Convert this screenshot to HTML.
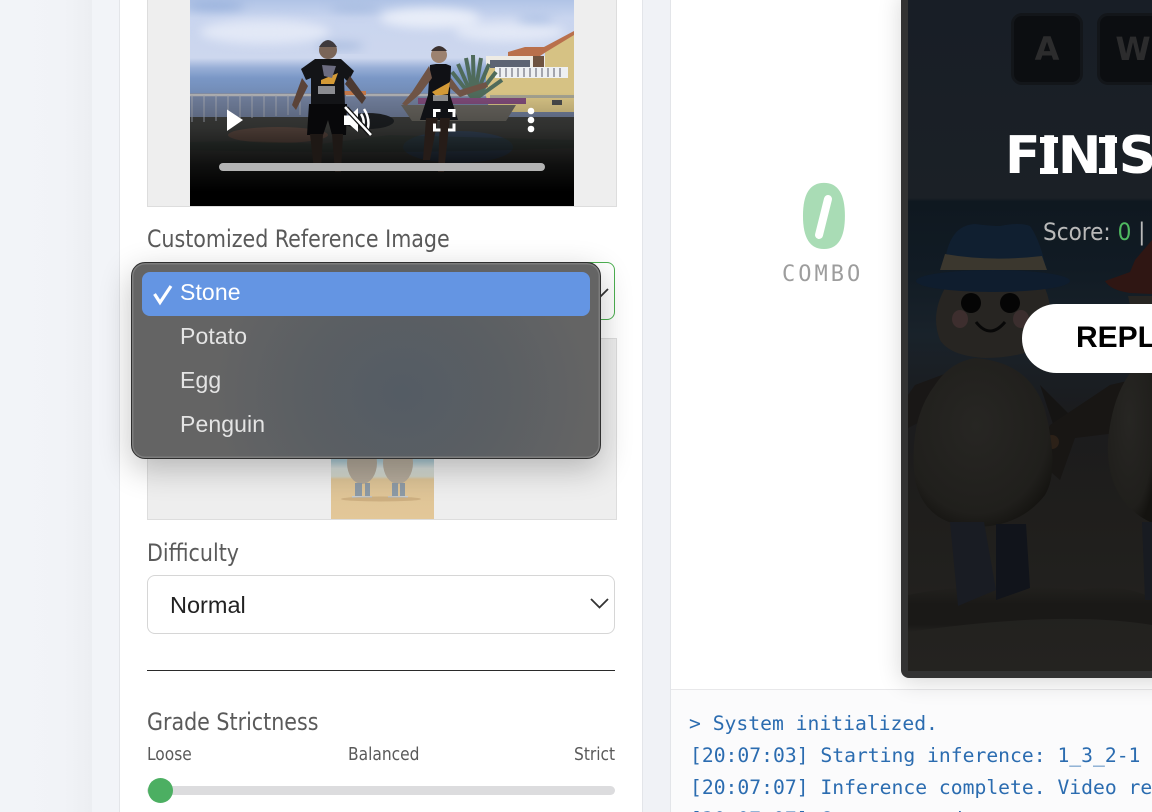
<!DOCTYPE html>
<html><head><meta charset="utf-8">
<style>
html,body{margin:0;padding:0;width:1152px;height:812px;overflow:hidden;background:#f0f2f6}
#root{position:absolute;left:0;top:0;width:1152px;height:812px;overflow:hidden;background:#f0f2f6}
div,span,svg{position:absolute;box-sizing:border-box}
span.i{position:static}
.t{white-space:nowrap;font-family:"DejaVu Sans Condensed","DejaVu Sans",sans-serif;color:#5a5a5a;line-height:1;transform-origin:0 50%;transform:scaleX(.955)}
.m{white-space:nowrap;font-family:"DejaVu Sans Mono",monospace;line-height:32px;font-size:19.7px;color:#2b6cb0;left:690px}
.o{white-space:nowrap;font-family:"Liberation Sans",sans-serif;font-size:23px;line-height:1;color:#e4e4e4;left:180px;letter-spacing:.1px}
</style></head><body><div id="root">
<div style="left:0;top:0;width:92px;height:812px;background:linear-gradient(90deg,#f2f4f8 0,#f1f3f7 70%,#eceef2 100%)"></div>
<div style="left:92px;top:0;width:28px;height:812px;background:#f2f4f8"></div>
<div style="left:119px;top:0;width:524px;height:812px;background:#fff;border-left:1px solid #e3e5e9;border-right:1px solid #e3e5e9"></div>

<!-- video -->
<div style="left:147px;top:-2px;width:470px;height:209px;background:#eee;border:1px solid #ddd"></div>
<svg style="left:190px;top:0" width="384" height="206" viewBox="0 0 384 206">
<defs>
<linearGradient id="sky" x1="0" y1="0" x2="0" y2="1"><stop offset="0" stop-color="#b0c3e6"/><stop offset=".18" stop-color="#c9d5ef"/><stop offset=".58" stop-color="#cdd7ee"/><stop offset=".68" stop-color="#97aed6"/><stop offset=".78" stop-color="#7a97c6"/><stop offset="1" stop-color="#6f87ae"/></linearGradient>
<linearGradient id="fade" x1="0" y1="0" x2="0" y2="1"><stop offset="0" stop-color="#000" stop-opacity="0"/><stop offset=".45" stop-color="#000" stop-opacity="0"/><stop offset=".62" stop-color="#000" stop-opacity=".25"/><stop offset=".8" stop-color="#000" stop-opacity=".75"/><stop offset=".93" stop-color="#000"/><stop offset="1" stop-color="#000"/></linearGradient>
<filter id="b6" color-interpolation-filters="sRGB"><feGaussianBlur stdDeviation="5"/></filter>
</defs>
<rect width="384" height="100" fill="url(#sky)"/>
<g filter="url(#b6)">
<ellipse cx="25" cy="6" rx="30" ry="4" fill="#94aeda"/>
<ellipse cx="165" cy="8" rx="26" ry="4" fill="#a6bbe0"/>
<ellipse cx="150" cy="46" rx="24" ry="3" fill="#9db3da"/>
<ellipse cx="240" cy="18" rx="50" ry="10" fill="#e8edf8"/>
<ellipse cx="75" cy="32" rx="65" ry="12" fill="#e2e8f6"/>
<ellipse cx="320" cy="32" rx="55" ry="10" fill="#e2e8f6"/>
<ellipse cx="345" cy="20" rx="18" ry="3" fill="#9db5de"/>
</g>
<rect y="93" width="384" height="24" fill="#717f9c"/>
<rect y="117" width="384" height="89" fill="#3f403e"/>
<g fill="none">
<path d="M0 95H130M156 95H300" stroke="#adaeb0" stroke-width="2.500"/>
<path d="M2 95V122M14 95V122M26 95V121M38 95V120M50 95V118M62 95V118M74 95V117M86 95V116M98 95V115M110 95V115M124 95V114" stroke-width="1" stroke="#a2a6b0"/>
</g>
<ellipse cx="88" cy="135" rx="50" ry="8" fill="#5f4b43"/>
<ellipse cx="178" cy="121" rx="26" ry="8" fill="#1e2124"/>
<ellipse cx="268" cy="147" rx="55" ry="16" fill="#36465a"/>
<path d="M0 142Q60 140 130 144L200 135L384 140V148Q200 155 0 150Z" fill="#2c3a32" opacity=".45"/>
<!-- house -->
<path d="M296 96V68H355V50L384 33V112H300Z" fill="#d6c284"/>
<path d="M296 56H355V68H296Z" fill="#eeebe4"/>
<path d="M318 52L335 47H354L384 31V35L356 52L350 56H318Z" fill="#b9704c"/>
<rect x="300" y="60" width="40" height="8" fill="#5d6473"/>
<rect x="343" y="56" width="11" height="12" fill="#6e5340"/>
<rect x="305" y="67" width="73" height="11" fill="#eef0f2"/>
<path d="M310 68V77M316 68V77M322 68V77M328 68V77M334 68V77M340 68V77M346 68V77M352 68V77M358 68V77M364 68V77M370 68V77" stroke="#8a8c98" stroke-width="1.500"/>
<rect x="362" y="100" width="10" height="5" fill="#4a4b4c"/>
<rect x="300" y="95" width="84" height="3" fill="#a3a190"/>
<rect x="154" y="91" width="22" height="4" fill="#c2784a"/>
<path d="M284 100L262 72M284 100L268 64M284 100L276 58M284 100L283 55M284 100L291 58M284 100L299 64M284 100L306 72M284 100L312 80" stroke="#4f6b5b" stroke-width="4"/>
<rect x="228" y="98" width="108" height="6" fill="#7e4a78"/>
<path d="M211 105H326L316 121H222Z" fill="#66635d"/>
<!-- gradient -->
<rect width="384" height="206" fill="url(#fade)"/>
<!-- man -->
<g>
<circle cx="138" cy="50" r="9" fill="#7a6558"/>
<path d="M129 47Q138 33 147 47Z" fill="#3f3a3d"/>
<path d="M111 69L125 59H151L164 71L158 82L154 78L155 106H121L121 78L116 80Z" fill="#131417"/>
<path d="M119 104H157L156 135H142L138 120L133 135H117Z" fill="#08080a"/>
<path d="M112 78L102 105L106 110L118 86Z" fill="#5b4338"/>
<path d="M160 76L176 98L172 104L155 84Z" fill="#4c3a32"/>
<path d="M120 134H133L131 170H124Z" fill="#1e1815"/>
<path d="M142 134H153L151 172H145Z" fill="#1e1815"/>
<path d="M131 80L148 73L144 84H131Z" fill="#d49a36"/>
<rect x="128" y="86" width="17" height="8" fill="#aaaab0" opacity=".8"/>
<path d="M132 65L146 66L142 78L134 76Z" fill="#6c6c80"/>
</g>
<!-- woman -->
<g>
<circle cx="249" cy="55" r="8" fill="#9c8270"/>
<path d="M241 51Q249 41 257 51Z" fill="#3c3230"/>
<path d="M240 65L246 64H256L261 66L260 95L268 120H230L238 95Z" fill="#101115"/>
<path d="M239 66L222 92L212 104L216 106L230 94L242 78Z" fill="#6f5446"/>
<path d="M261 78L270 90L296 82L298 87L270 97L258 86Z" fill="#6f5446"/>
<path d="M236 118H248L240 160H233Z" fill="#261c18"/>
<path d="M250 118H260L254 172H248Z" fill="#261c18"/>
<path d="M242 92L260 82L258 94L246 96Z" fill="#d49a36"/>
<rect x="243" y="95" width="15" height="6" fill="#aaa" opacity=".8"/>
</g>
<!-- scrub bar -->
<rect x="29" y="163" width="326" height="8" rx="4" fill="#b3b3b3"/>
<!-- icons -->
<path d="M37 109.500V131L53 120Z" fill="#fff"/>
<g transform="translate(154 106)">
<path d="M0 9.500H6L14 2V26L6 19H0Z" fill="#fff"/>
<path d="M17 8Q21 14 19 20M20 3Q27 14 23 25" fill="none" stroke="#fff" stroke-width="2.500"/>
<path d="M2 2L26 28" stroke="#111" stroke-width="5"/>
<path d="M1 1L27 29" stroke="#fff" stroke-width="2.500"/>
</g>
<path d="M244.500 117V110.500H250.500M258 110.500H264V117M264 123.500V130H258M250.500 130H244.500V123.500" fill="none" stroke="#fff" stroke-width="3"/>
<circle cx="341" cy="111" r="3.300" fill="#fff"/><circle cx="341" cy="120" r="3.300" fill="#fff"/><circle cx="341" cy="129" r="3.300" fill="#fff"/>
</svg>

<div class="t" style="left:147px;top:227px;font-size:24px">Customized Reference Image</div>

<!-- green select behind -->
<div style="left:147px;top:262px;width:468px;height:58px;border:1px solid #4caf50;border-radius:8px;background:#fff"></div>
<svg style="left:590px;top:280px" width="24" height="22"><path d="M2 9L10 17L18 9" fill="none" stroke="#333" stroke-width="1.800"/></svg>

<!-- image -->
<div style="left:147px;top:338px;width:470px;height:182px;background:#eee;border:1px solid #ddd"></div>
<svg style="left:331px;top:338px" width="103" height="181" viewBox="0 0 103 181">
<defs><linearGradient id="sand" x1="0" y1="0" x2="0" y2="1"><stop offset="0" stop-color="#8fb3c0"/><stop offset=".68" stop-color="#a9c6cf"/><stop offset=".72" stop-color="#d5dcd8"/><stop offset=".765" stop-color="#d0d4c8"/><stop offset=".78" stop-color="#dcc396"/><stop offset="1" stop-color="#e3c798"/></linearGradient></defs>
<rect width="103" height="181" fill="url(#sand)"/>
<ellipse cx="31" cy="125" rx="15" ry="21" fill="#b0a697"/>
<ellipse cx="67" cy="125" rx="15" ry="21" fill="#b4aa9b"/>
<path d="M24 145h7v13h-7zM34 145h5v13h-5zM61 145h6v13h-6zM69 145h5v13h-5z" fill="#8d9aa5"/>
<path d="M21 158h20v2h-20zM57 158h20v2h-20z" fill="#c6ccd0"/>
<ellipse cx="50" cy="161" rx="40" ry="2.500" fill="#b99a6c" opacity=".5"/>
</svg>

<!-- popup -->
<div style="left:131px;top:262px;width:470px;height:197px;border-radius:14px;background:radial-gradient(ellipse 190px 170px at 270px 130px,#545c64 0,#5b5f63 55%,#646464 100%);border:1px solid #2f2f2f;box-shadow:inset 0 0 0 1.500px #7d7d7d,0 10px 32px rgba(0,0,0,.24)"></div>
<div style="left:142px;top:272px;width:448px;height:44px;border-radius:8px;background:#6495e3"></div>
<svg style="left:150px;top:280px" width="26" height="26"><path d="M4.500 14L10 22.500L21 6" fill="none" stroke="#fff" stroke-width="3.200"/></svg>
<div class="o" style="top:281px;color:#fff">Stone</div>
<div class="o" style="top:325px">Potato</div>
<div class="o" style="top:369px">Egg</div>
<div class="o" style="top:413px">Penguin</div>

<div class="t" style="left:147px;top:541px;font-size:24px">Difficulty</div>
<div style="left:147px;top:575px;width:468px;height:59px;border:1px solid #d6d6d6;border-radius:8px;background:#fff"></div>
<div style="left:170px;top:594px;font:23.500px/1 'Liberation Sans',sans-serif;color:#222;white-space:nowrap">Normal</div>
<svg style="left:590px;top:595px" width="20" height="18"><path d="M1 4L9.500 12.500L18 4" fill="none" stroke="#333" stroke-width="1.800"/></svg>
<div style="left:147px;top:670px;width:468px;height:1px;background:#2a2a2a"></div>

<div class="t" style="left:147px;top:710px;font-size:24px">Grade Strictness</div>
<div class="t" style="left:147px;top:746px;font-size:18px">Loose</div>
<div class="t" style="left:348px;top:746px;font-size:18px">Balanced</div>
<div class="t" style="left:574px;top:746px;font-size:18px">Strict</div>
<div style="left:147px;top:786px;width:468px;height:9px;border-radius:5px;background:#dcdcde"></div>
<div style="left:148px;top:778px;width:25px;height:25px;border-radius:50%;background:#4caf62"></div>

<!-- right panel -->
<div style="left:670px;top:0;width:482px;height:812px;background:#fff;border-left:1px solid #e3e5e9"></div>
<div style="left:671px;top:689px;width:481px;height:123px;background:#fbfbfc;border-top:1px solid #e8e8ea"></div>
<div style="left:901px;top:-10px;width:300px;height:688px;background:#333;border-radius:8px;box-shadow:0 4px 24px rgba(0,0,0,.16)"></div>

<svg style="left:908px;top:0" width="244" height="671" viewBox="908 0 244 671">
<defs>
<linearGradient id="gbg" x1="0" y1="0" x2="0" y2="1">
<stop offset="0" stop-color="#181e26"/><stop offset=".295" stop-color="#1b2026"/><stop offset=".3" stop-color="#0f1820"/><stop offset=".4" stop-color="#111b24"/><stop offset=".5" stop-color="#19222a"/><stop offset=".62" stop-color="#1b1b1d"/><stop offset=".76" stop-color="#1f1e1c"/><stop offset="1" stop-color="#242320"/>
</linearGradient>
<linearGradient id="dune" x1="0" y1="0" x2="0" y2="1"><stop offset="0" stop-color="#1a1917" stop-opacity="0"/><stop offset=".4" stop-color="#1a1917"/><stop offset=".85" stop-color="#1a1917"/><stop offset="1" stop-color="#1a1917" stop-opacity="0"/></linearGradient>
<radialGradient id="bd" cx=".45" cy=".4" r=".65"><stop offset="0" stop-color="#272623"/><stop offset=".8" stop-color="#201f1c"/><stop offset="1" stop-color="#141310"/></radialGradient>
</defs>
<rect x="908" width="244" height="671" fill="url(#gbg)"/>
<path d="M908 595Q980 580 1080 590Q1120 582 1152 598V625Q1060 610 908 632Z" fill="url(#dune)"/>
<g>
<!-- arms -->
<path d="M950 372L915 385L908 395V428L940 412Z" fill="#191716"/>
<path d="M1040 385L1070 415L1055 430Z" fill="#151413"/>
<path d="M1050 425L1110 385L1140 378L1140 430L1075 438L1060 480L1035 458Z" fill="#181614"/>
<circle cx="1052" cy="442" r="7" fill="#2c2118"/>
<!-- body 1 -->
<path d="M975 358Q1030 362 1045 410Q1060 470 1045 495Q1020 527 975 527Q925 525 915 480Q908 420 935 385Q950 362 975 358Z" fill="url(#bd)"/>
<!-- legs -->
<path d="M950 522H984L996 590L958 606Z" fill="#191c23"/>
<path d="M996 524H1026L1030 588L996 600Z" fill="#11141b"/>
<!-- head -->
<path d="M945 288H1045Q1058 320 1040 348Q1015 358 985 358Q950 356 940 340Q930 315 945 288Z" fill="#272522"/>
<!-- hat -->
<path d="M946 255Q952 225 975 224Q990 226 1000 226Q1020 222 1030 226Q1040 240 1046 268H941Z" fill="#101f30"/>
<path d="M945 254Q990 262 1042 256L1047 270H940Z" fill="#3b372e"/>
<ellipse cx="993" cy="281" rx="77" ry="11" fill="#0f1d2e"/>
<!-- face -->
<ellipse cx="971" cy="303" rx="10" ry="10" fill="#050505"/>
<ellipse cx="1010" cy="303" rx="10" ry="10" fill="#050505"/>
<path d="M976 322Q990 340 1005 322" fill="none" stroke="#080808" stroke-width="3"/>
<ellipse cx="960" cy="319" rx="8" ry="9" fill="#3d2e2e"/>
<ellipse cx="1021" cy="319" rx="8" ry="9" fill="#3b2e2e"/>
<!-- second figure -->
<path d="M1155 352Q1115 372 1108 440Q1105 500 1150 522L1152 522V352Z" fill="url(#bd)"/>
<path d="M1142 522H1152V600H1145Z" fill="#181b21"/>
<path d="M1152 240L1135 260L1130 272L1105 281Q1110 290 1130 293L1152 294Z" fill="#2f1613"/>
<path d="M1128 296H1152V305H1130Z" fill="#272522"/>
</g>
</svg>

<!-- keys -->
<div style="left:1011px;top:13px;width:72px;height:72px;border-radius:11px;background:#0c0e11;border:3px solid #13161a"></div>
<div style="left:1097px;top:13px;width:72px;height:72px;border-radius:11px;background:#0c0e11;border:3px solid #13161a"></div>
<div style="left:1011px;top:13px;width:72px;height:72px;text-align:center;font:bold 32px/72px 'DejaVu Sans',sans-serif;color:#2c2c2d">A</div>
<div style="left:1097px;top:13px;width:72px;height:72px;text-align:center;font:bold 32px/72px 'DejaVu Sans',sans-serif;color:#2c2c2d">W</div>

<div style="left:1005px;top:126px;font:bold 52px/60px 'DejaVu Sans',sans-serif;color:#fff;white-space:nowrap;letter-spacing:-1px">FINISH</div>
<div style="left:1040px;top:137px;width:18px;height:6px;background:#fff"></div>
<div style="left:1040px;top:168px;width:18px;height:6px;background:#fff"></div>
<div style="left:1099px;top:137px;width:18px;height:6px;background:#fff"></div>
<div style="left:1099px;top:168px;width:18px;height:6px;background:#fff"></div>
<div class="t" style="left:1043px;top:220px;font-size:24px;color:#b9b9b9;transform:none">Score: <span class="i" style="color:#4fb960">0</span> |</div>
<div style="left:1022px;top:304px;width:300px;height:69px;border-radius:35px;background:#fff"></div>
<div style="left:1076px;top:321px;font:bold 30px/34px 'Liberation Sans',sans-serif;color:#000;white-space:nowrap">REPLAY</div>

<!-- combo -->
<div style="left:772px;top:168px;width:104px;text-align:center;font:bold 87px/100px 'DejaVu Sans Mono',monospace;color:#a9dcb5">0</div>
<svg style="left:801px;top:186px" width="50" height="74"><ellipse cx="23" cy="31" rx="13" ry="24" fill="#a9dcb5"/><path d="M27 13L18 49" stroke="#fff" stroke-width="8" stroke-linecap="round"/></svg>
<div style="left:782px;top:263px;font:22px/24px 'DejaVu Sans Mono',monospace;color:#9d9d9d;letter-spacing:3px;white-space:nowrap">COMBO</div>

<!-- log -->
<div class="m" style="left:689px;top:708px">&gt; System initialized.</div>
<div class="m" style="top:740px">[20:07:03] Starting inference: 1_3_2-1</div>
<div class="m" style="top:772px">[20:07:07] Inference complete. Video ready</div>
<div class="m" style="top:804px">[20:07:07] Game started.</div>
</div></body></html>
